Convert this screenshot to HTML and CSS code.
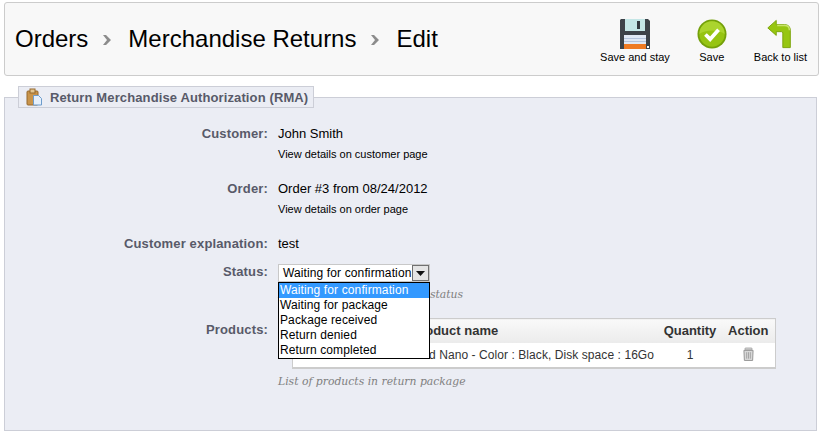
FILE: index.html
```html
<!DOCTYPE html>
<html lang="en">
<head>
    <meta charset="UTF-8">
    <title>Merchandise Returns</title>
    <link rel="stylesheet" href="styles.css">
</head>
<body>
    <div class="toolbar">
        <h1 class="breadcrumb">
            <span>Orders</span>
            <svg class="crumb-arrow" width="8" height="10" viewBox="0 0 8 10"><path d="M0 0h3l5 5-5 5H0l4-5z" fill="#8c8c8c"/></svg>
            <span>Merchandise Returns</span>
            <svg class="crumb-arrow" width="8" height="10" viewBox="0 0 8 10"><path d="M0 0h3l5 5-5 5H0l4-5z" fill="#8c8c8c"/></svg>
            <span>Edit</span>
        </h1>
        <div class="actions">
            <a class="action" href="#">
                <svg width="30" height="30" viewBox="0 0 30 30">
                    <path d="M1 0h27l2 2v28H0V1z" fill="#3c4248"/>
                    <rect x="5" y="0" width="20" height="12" fill="#c4e6e6"/>
                    <rect x="17" y="2" width="3" height="8" fill="#33393f"/>
                    <rect x="4" y="16" width="22" height="14" fill="#dfe8f4"/>
                    <path d="M4 19.500h22M4 22.500h22" stroke="#b4c4dc"/>
                    <rect x="4" y="25" width="22" height="5" fill="#ee7a22"/>
                    <rect x="27" y="27" width="2" height="2" fill="#fff"/>
                </svg>
                <span>Save and stay</span>
            </a>
            <a class="action" href="#">
                <svg width="30" height="30" viewBox="0 0 32 32">
                    <circle cx="16" cy="16" r="15.500" fill="#74a00a"/>
                    <circle cx="16" cy="16" r="13.500" fill="#96c412"/>
                    <path d="M2.500 16a13.500 13.500 0 0 1 27 0c-6-5-21-5-27 0z" fill="#abd42e"/>
                    <path d="M9 16.500l5 5 9-10" fill="none" stroke="#fff" stroke-width="4"/>
                </svg>
                <span>Save</span>
            </a>
            <a class="action" href="#">
                <svg width="30" height="30" viewBox="0 0 32 32">
                    <path d="M3 9.500L12 1.500v4.500h9c4 0 6 2.500 6 6v18.500h-8V15c0-1-.5-1.500-1.500-1.500H12v4z" fill="#97c611" stroke="#7aa208" stroke-linejoin="round"/>
                    <path d="M13 7h8c3 0 5 2 5 5" fill="none" stroke="#c8e46a" stroke-width="1.500"/>
                </svg>
                <span>Back to list</span>
            </a>
        </div>
    </div>

    <fieldset class="panel">
        <legend>
            <svg width="18" height="18" viewBox="0 0 18 18">
                <rect x="1" y="3" width="11" height="14" rx="1" fill="#c9944a" stroke="#96692c"/>
                <rect x="4" y="1" width="5" height="4" fill="#e2c590" stroke="#96692c"/>
                <path d="M7.500 7.500h5l3 3v6.500h-8z" fill="#e6f0fb" stroke="#6d9ccc"/>
            </svg>
            Return Merchandise Authorization (RMA)
        </legend>

        <div class="row row-customer">
            <div class="label">Customer:</div>
            <div class="value">
                <div>John Smith</div>
                <a class="detail" href="#">View details on customer page</a>
            </div>
        </div>
        <div class="row row-order">
            <div class="label">Order:</div>
            <div class="value">
                <div>Order #3 from 08/24/2012</div>
                <a class="detail" href="#">View details on order page</a>
            </div>
        </div>
        <div class="row row-explain">
            <div class="label">Customer explanation:</div>
            <div class="value">test</div>
        </div>
        <div class="row row-status">
            <div class="label">Status:</div>
            <div class="value">
                <div class="select-wrap">
                    <div class="select">
                        <span class="select-text">Waiting for confirmation</span>
                        <span class="select-btn"><svg width="9" height="5" viewBox="0 0 9 5"><path d="M0 0h9L4.500 5z" fill="#111"/></svg></span>
                    </div>
                    <ul class="dropdown">
                        <li class="selected">Waiting for confirmation</li>
                        <li>Waiting for package</li>
                        <li>Package received</li>
                        <li>Return denied</li>
                        <li>Return completed</li>
                    </ul>
                </div>
                <p class="hint">Merchandise return (RMA) status</p>
            </div>
        </div>
        <div class="row row-products">
            <div class="label">Products:</div>
            <div class="value">
                <table class="products">
                    <thead>
                        <tr>
                            <th class="col-ref"></th>
                            <th>Product name</th>
                            <th class="col-qty">Quantity</th>
                            <th class="col-action">Action</th>
                        </tr>
                    </thead>
                    <tbody>
                        <tr>
                            <td></td>
                            <td>iPod Nano - Color : Black, Disk space : 16Go</td>
                            <td class="center">1</td>
                            <td class="center">
                                <svg class="trash" width="11" height="15" viewBox="0 0 12 15">
                                    <rect x="2" y="0.500" width="8" height="2" rx="1" fill="#eeeeee" stroke="#999999"/>
                                    <path d="M1 3h10l-.5 11H1.500z" fill="#d8d8d8" stroke="#8f8f8f"/>
                                    <path d="M4 5v7M6 5v7M8 5v7" stroke="#a0a0a0"/>
                                </svg>
                            </td>
                        </tr>
                    </tbody>
                </table>
                <p class="hint table-hint">List of products in return package</p>
            </div>
        </div>
    </fieldset>
</body>
</html>
```

FILE: styles.css
```css
body {
    font-family: "Liberation Sans", Arial, sans-serif;
    font-size: 12px;
    color: #000;
    background-color: #fff;
    margin: 0;
    padding: 2px 0 0 4px;
}

a {
    color: #000;
    text-decoration: none;
}

.toolbar {
    width: 813px;
    height: 72px;
    display: flex;
    justify-content: space-between;
    align-items: center;
    background-color: #f8f8f8;
    border: 1px solid #cccccc;
    border-radius: 3px;
}

.breadcrumb {
    display: flex;
    align-items: center;
    margin: 0 0 0 10px;
    font-size: 24px;
    font-weight: normal;
}

.crumb-arrow {
    margin: 2px 17px 0 15px;
}

.actions {
    display: flex;
    gap: 27px;
    padding: 3px 11px 0 0;
}

.action {
    display: flex;
    flex-direction: column;
    align-items: center;
    font-size: 11px;
    gap: 2px;
}

.panel {
    box-sizing: border-box;
    width: 813px;
    height: 345px;
    margin: 10px 0 0;
    padding: 0;
    background-color: #ebedf4;
    border: 1px solid #ccced7;
}

.panel legend {
    display: flex;
    align-items: center;
    gap: 6px;
    box-sizing: border-box;
    height: 22px;
    margin-left: 13px;
    padding: 0 5px 0 7px;
    font-size: 13px;
    letter-spacing: 0.12px;
    font-weight: bold;
    color: #585a69;
    background-color: #ebedf4;
    border: 1px solid #ccced7;
}

.row {
    display: flex;
    gap: 10px;
}

.label {
    width: 263px;
    text-align: right;
    font-size: 13px;
    letter-spacing: 0.15px;
    font-weight: bold;
    color: #585a69;
}

.value {
    flex: 1;
    font-size: 13px;
}

.detail {
    display: block;
    margin-top: 7px;
    font-size: 11px;
}

.row-customer { margin-top: 18px; }
.row-order { margin-top: 21px; }
.row-explain { margin-top: 21px; }
.row-status { margin-top: 13px; }
.row-products { margin-top: 17px; }
.row-products .label { padding-top: 4px; }

.select-wrap {
    position: relative;
    z-index: 1;
    width: 152px;
    font-size: 12px;
    letter-spacing: 0.12px;
}

.select {
    box-sizing: border-box;
    height: 18px;
    display: flex;
    align-items: center;
    justify-content: space-between;
    padding-left: 4px;
    background-color: #fff;
    border: 1px solid #c8c8c8;
}

.select-text {
    white-space: nowrap;
}

.select-btn {
    box-sizing: border-box;
    width: 17px;
    height: 16px;
    display: flex;
    align-items: center;
    justify-content: center;
    background-color: #e4e4e4;
    border: 1px solid #707070;
}

.dropdown {
    position: absolute;
    top: 18px;
    left: 0;
    box-sizing: border-box;
    width: 152px;
    margin: 0;
    padding: 0;
    list-style: none;
    background-color: #fff;
    border: 1px solid #000;
}

.dropdown li {
    height: 15px;
    line-height: 15px;
    padding-left: 1px;
}

.dropdown .selected {
    color: #fff;
    background-color: #3399ff;
}

.hint {
    margin: 6px 0 0;
    font-family: "DejaVu Serif", "Liberation Serif", serif;
    font-size: 10.8px;
    font-style: italic;
    color: #7f7f7f;
}

.products {
    table-layout: fixed;
    width: 484px;
    margin-left: 14px;
    border-collapse: collapse;
    background-color: #fff;
    border: 1px solid #cccccc;
    border-bottom-width: 2px;
    font-size: 12px;
}

.products th {
    box-sizing: border-box;
    height: 24px;
    padding: 0 6px;
    font-size: 13px;
    text-align: left;
    color: #333;
    background: linear-gradient(#f9f9f9, #ebebeb);
    white-space: nowrap;
}

.products td {
    height: 24px;
    padding: 0 6px;
    color: #333;
    letter-spacing: 0.07px;
    white-space: nowrap;
}

.products .center,
.products .col-qty,
.products .col-action {
    text-align: center;
}

.products .col-ref {
    width: 113px;
}

.products .col-qty {
    width: 63px;
    padding: 0;
}

.products .col-action {
    width: 54px;
    padding: 0;
}

.trash {
    display: block;
    margin: 0 auto;
}

.table-hint {
    margin-top: 6px;
}
```
